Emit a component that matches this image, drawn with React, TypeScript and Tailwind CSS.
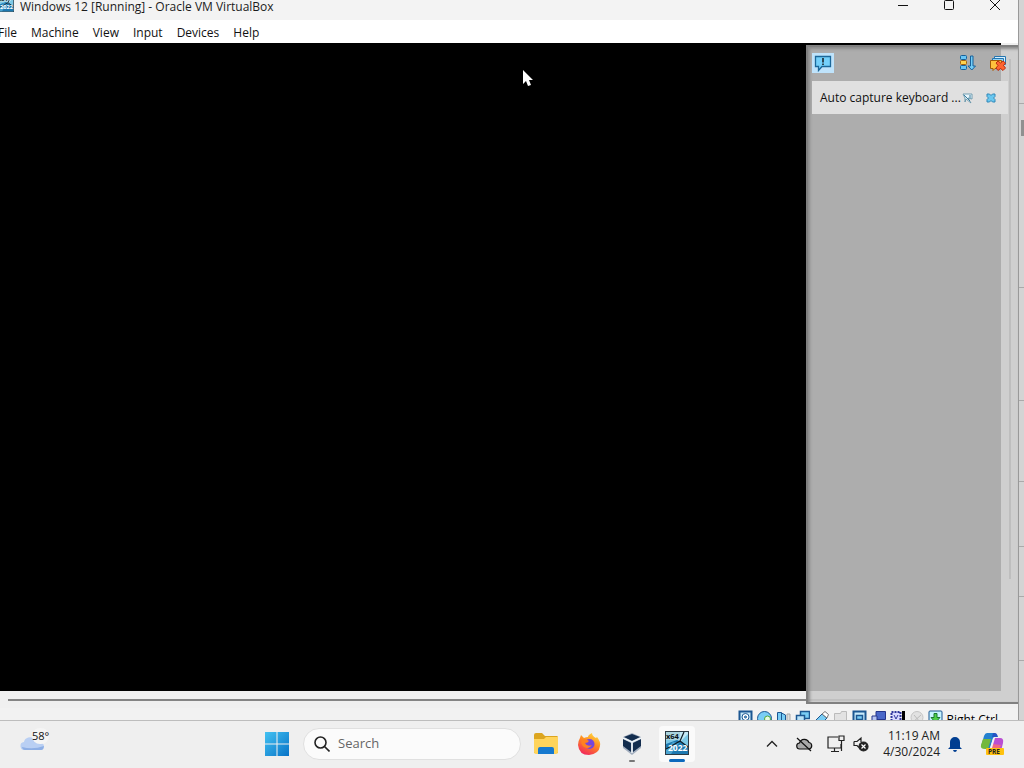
import type { ReactNode } from "react";

const menus = ["File", "Machine", "View", "Input", "Devices", "Help"];

// row heights of the window that sits behind, seen at the right edge
const rowHeights = [104, 184, 113, 81, 65, 50, 64];

function VmIcon({ className }: { className?: string }) {
  return (
    <svg viewBox="0 0 24 24" className={className}>
      <rect width="24" height="24" fill="#2b3a44" />
      <rect x="1" y="1" width="22" height="22" fill="#7cc8e6" />
      <path d="M1 13 12 9 23 15V23H1z" fill="#1d78b0" />
      <path d="M11 1 15 11 23 3V1z" fill="#c3e9f6" />
      <path d="M1 18 8 11 14 12 6 23H1z" fill="#4aa3d0" />
      <path d="M19 1 15 10 1 18M15 10 23 16" stroke="#0e1c26" strokeWidth="1.200" fill="none" />
      <rect x="1" y="1" width="14" height="8" fill="#a9d3dd" />
      <text x="1" y="8" fontSize="7.500" fontWeight="bold" fill="#0b1218" fontFamily="Open Sans, sans-serif">x64</text>
      <text x="3" y="20" fontSize="8.500" fontWeight="bold" fill="#fff" fontFamily="Open Sans, sans-serif">2022</text>
    </svg>
  );
}

function TitleBar() {
  return (
    <header className="flex h-5 shrink-0 items-start justify-between bg-[#f3f3f3]">
      <div className="flex items-start gap-1.5">
        <div className="h-3 w-3.5 overflow-hidden">
          <VmIcon className="-mt-1 -ml-0.5 h-4 w-4" />
        </div>
        <h1 className="text-xs leading-[14px] whitespace-nowrap text-[#1b1b1b]">Windows 12 [Running] - Oracle VM VirtualBox</h1>
      </div>
      <div className="flex">
        <button aria-label="Minimize" className="flex h-3 w-[46px] justify-center">
          <svg viewBox="0 0 12 12" className="h-3 w-3" stroke="#111" fill="none"><path d="M1 5.500h10" /></svg>
        </button>
        <button aria-label="Maximize" className="flex h-3 w-[46px] justify-center">
          <svg viewBox="0 0 12 12" className="h-3 w-3" stroke="#111" fill="none"><rect x="1.500" y=".5" width="9" height="9" rx="1" /></svg>
        </button>
        <button aria-label="Close" className="flex h-3 w-[46px] justify-center">
          <svg viewBox="0 0 12 12" className="h-3 w-3" stroke="#111" fill="none"><path d="M1 0 11 10M11 0 1 10" /></svg>
        </button>
      </div>
    </header>
  );
}

function MenuBar() {
  return (
    <div className="h-[23px] shrink-0 bg-white">
      <nav className="-ml-0.5 flex gap-3.5 pt-[5px] text-xs text-[#111]">
        {menus.map((m) => (
          <button key={m}>{m}</button>
        ))}
      </nav>
    </div>
  );
}

function NotificationCenter() {
  return (
    <aside className="absolute top-0.5 right-0 bottom-1 w-[212px] border-2 border-r-0 border-[#808080] bg-[#cacaca]/86 shadow-[inset_2px_2px_3px_#8a8a8a]">
      <div className="mb-0.5 flex h-8 items-center pr-3 pl-1">
        <button aria-label="Notifications" className="flex h-5 w-[22px] items-center justify-center bg-[#bfe3fb]">
          <svg viewBox="0 0 18 18" className="h-4.5 w-4.5">
            <path d="M1.500 2.500h15v10H8l-3.500 4v-4h-3z" fill="#74d0fa" stroke="#1b6799" strokeWidth="1.300" />
            <path d="M9 4v4.500M9 9.500V11" stroke="#111" strokeWidth="1.400" />
          </svg>
        </button>
        <button aria-label="Sort notifications" className="ml-auto">
          <svg viewBox="0 0 16 16" className="h-4 w-4" strokeWidth="1">
            <rect x=".5" y=".5" width="6" height="4" rx="1" fill="#69c5f5" stroke="#17609a" />
            <rect x=".5" y="5.500" width="6" height="4" rx="1" fill="#ffd34f" stroke="#a7620b" />
            <rect x=".5" y="10.500" width="6" height="4" rx="1" fill="#69c5f5" stroke="#17609a" />
            <path d="M10.500 1h2.500v10h2.500l-3.700 4-3.800-4h2.500z" fill="#73cef8" stroke="#17609a" />
          </svg>
        </button>
        <button aria-label="Remove all notifications" className="ml-3.5">
          <svg viewBox="0 0 16 16" className="h-4 w-4">
            <path d="M4.500 1.500h11v8h-11z" fill="#d9f1ff" stroke="#2576b0" />
            <path d="M2.500 3.500h11v8h-11z" fill="#8fd4fa" stroke="#2576b0" />
            <path d="M.5 5.500h11v8H5l-2 2v-2H.5z" fill="#ffc23d" stroke="#a35a08" />
            <path d="m6 8 2-2 2.500 2L13 6l2.500 2-2 2.500 2 2.500-2.500 2.500-2.500-2L8 15.500 6 13l2-2.500z" fill="#ff6530" stroke="#b82e10" />
          </svg>
        </button>
      </div>
      <div className="mr-2.5 ml-1 flex h-[33px] items-center bg-[#e0e0e0] pr-3 pl-2">
        <p className="grow text-xs whitespace-nowrap text-[#111]">Auto capture keyboard ...</p>
        <button aria-label="Keep notification">
          <svg viewBox="0 0 12 12" className="h-3 w-3">
            <path d="M1 2h9v5L6 6l3 5-5-4-1 3V6z" fill="#e8f5fb" stroke="#6795a9" strokeWidth=".9" />
            <path d="m2 3 6 6M8 3v3" stroke="#397e9f" />
          </svg>
        </button>
        <button aria-label="Close notification" className="ml-3">
          <svg viewBox="0 0 10 10" className="h-2.5 w-2.5">
            <path d="M1 1h2.500L5 2.500 6.500 1H9v2.500L7.500 5 9 6.500V9H6.500L5 7.500 3.500 9H1V6.500L2.500 5 1 3.500z" fill="#69c7ef" stroke="#3087b8" />
          </svg>
        </button>
      </div>
    </aside>
  );
}

function StatusIcon({ label, children }: { label: string; children: ReactNode }) {
  return (
    <button aria-label={label}>
      <svg viewBox="0 0 15 15" className="h-[15px] w-[15px]" stroke="#1c5792" fill="#79cdf5">{children}</svg>
    </button>
  );
}

function StatusBar() {
  return (
    <footer className="flex h-3 shrink-0 items-start justify-end gap-1 overflow-hidden bg-[#f2f2f2] pt-0.5 pr-5">
      <StatusIcon label="Hard disks">
        <path d="M1.500 1.500h12v13h-12z" fill="#c9eafa" strokeWidth="2" />
        <circle cx="7.500" cy="7" r="3.500" fill="#fff" />
        <circle cx="7.500" cy="7" r="1" />
      </StatusIcon>
      <StatusIcon label="Optical drives">
        <circle cx="7.500" cy="8.500" r="7" />
        <circle cx="10.500" cy="9" r="3" fill="#eafbe0" stroke="#4fa638" />
      </StatusIcon>
      <StatusIcon label="Audio">
        <path d="M1.500 2.500h4v10h-4zM5.500 3l4 2v9l-4-2z" />
        <path d="M11 4h3v9h-3z" fill="#ddd" stroke="#aaa" />
      </StatusIcon>
      <StatusIcon label="Network">
        <path d="M5.500 1.500h9v7h-9z" strokeWidth="1.500" />
        <path d="M1.500 5.500h8v6h-8z" fill="#b9e2f8" strokeWidth="1.500" />
      </StatusIcon>
      <StatusIcon label="USB">
        <path d="m1 11 7-7 5 4-7 7z" />
        <path d="m8 4 3-2.500 3.500 3L13 8z" fill="#fff" stroke="#777" />
      </StatusIcon>
      <StatusIcon label="Shared folders">
        <path d="M1.500 3.500h6l1-2h5v12h-12z" fill="#e2e2e2" stroke="#bbb" />
      </StatusIcon>
      <StatusIcon label="Display">
        <path d="M1.500 1.500h12v12h-12z" fill="#c9eafa" strokeWidth="2" />
        <path d="M4.500 5.500h6v4h-6z" strokeWidth="1.500" />
      </StatusIcon>
      <StatusIcon label="Recording">
        <path d="M5 1.500h9.500v8H5z" fill="#4967c8" stroke="#24358b" />
        <path d="M1 6h5v7H1z" fill="#b8c6f1" stroke="#24358b" />
      </StatusIcon>
      <StatusIcon label="Processor">
        <path d="M1.500 2h9v12h-9z" fill="#d8d9ff" stroke="#30389d" strokeDasharray="2 1" strokeWidth="2" />
        <path d="m4 5 2 4 2-4" fill="none" stroke="#30389d" />
        <path d="M12 1h3v13h-3z" fill="#000" stroke="none" />
      </StatusIcon>
      <StatusIcon label="Mouse integration">
        <circle cx="8" cy="7.500" r="6" fill="#e2e2e2" stroke="#c5c5c5" />
        <path d="m4 12 8-7M5 5l6 7" stroke="#bbb" />
      </StatusIcon>
      <StatusIcon label="Keyboard">
        <rect x="1" y="1" width="13" height="13" rx="1" fill="#c8f4ff" />
        <path d="M6 3.500h3v4h3l-4.500 5L3 7.500h3z" fill="#50cf48" stroke="#187731" />
      </StatusIcon>
      <span className="text-xs leading-5">Right Ctrl</span>
    </footer>
  );
}

function Taskbar() {
  return (
    <footer className="flex h-12 shrink-0 items-center border-t border-[#bdbdbd] bg-[#efefef] pb-0.5">
      <div className="flex-1 pb-1 pl-5">
        <button className="flex items-start" aria-label="Weather">
          <svg viewBox="0 0 26 20" className="h-5 w-6.5">
            <path d="M5 18a4 4 0 0 1-1-8 6 6 0 0 1 10-3 6 6 0 0 1 8 4 4 4 0 0 1 0 7z" fill="#b9cff3" />
            <path d="M2 15q11 3 22-1-.5 4-3 4H5q-2.500 0-3-3" fill="#8eafe5" />
          </svg>
          <span className="-mt-1 -ml-3.5 rounded-full bg-[#f5f5f5] text-[11px] leading-4 text-[#111]">58°</span>
        </button>
      </div>
      <div className="mr-16 flex items-center">
        <button aria-label="Start">
          <svg viewBox="0 0 23 23" className="h-6 w-6">
            <defs>
              <linearGradient id="start" x1="0" y1="0" x2="1" y2="1">
                <stop stopColor="#43c2f2" />
                <stop offset="1" stopColor="#0873c7" />
              </linearGradient>
            </defs>
            <path d="M0 0h11v11H0zM12 0h11v11H12zM0 12h11v11H0zM12 12h11v11H12z" fill="url(#start)" />
          </svg>
        </button>
        <label className="ml-3.5 flex h-8 w-[218px] items-center gap-2 rounded-full border border-[#e0e0e0] bg-[#fbfbfb] px-2.5">
          <svg viewBox="0 0 16 16" className="h-4 w-4 shrink-0" fill="none" stroke="#222" strokeWidth="1.600">
            <circle cx="6.500" cy="6.500" r="5.500" />
            <path d="m10.500 10.500 5 5" />
          </svg>
          <input placeholder="Search" aria-label="Search" className="w-full min-w-0 text-[13px] outline-none placeholder:text-[#666]" />
        </label>
        <button aria-label="File Explorer" className="ml-3">
          <svg viewBox="0 0 26 24" className="h-6 w-6.5">
            <path d="M1 3q0-2 2-2h6l3 3h12q1 0 1 2v15H1z" fill="#dca51f" />
            <path d="M1 7h10l2-2h12v15q0 2-2 2H3q-2 0-2-2z" fill="#ffd45b" />
            <path d="M5 22v-5q0-2 2-2h12q2 0 2 2v5z" fill="#1679cf" />
          </svg>
        </button>
        <button aria-label="Firefox" className="ml-4.5">
          <svg viewBox="0 0 24 24" className="h-6 w-6">
            <defs>
              <linearGradient id="fox" x1=".8" y1="0" x2=".3" y2="1">
                <stop stopColor="#ffde42" />
                <stop offset=".45" stopColor="#ff8a20" />
                <stop offset="1" stopColor="#f2265d" />
              </linearGradient>
            </defs>
            <path d="M3 6 4 3l3 3q2-1 4-1 0-2 4-4 0 3 4 5l1-1q4 5 3 9-1 8-11 9Q2 23 1 13q0-4 2-7" fill="url(#fox)" />
            <circle cx="12.500" cy="12" r="5" fill="#7646db" />
            <path d="M5 8q4-2 7 1-1 2-4 2 2 4 7 2-3 5-8 2-4-3-2-7" fill="#ff8120" />
          </svg>
        </button>
        <button aria-label="VirtualBox" className="ml-5 flex flex-col items-center gap-1 pt-1.5">
          <svg viewBox="0 0 22 24" className="h-6 w-5.5">
            <path d="m2 5 9-4 9 4v11l-9 7-9-7z" fill="#a3afbf" />
            <path d="m3 5 8-3 8 3-8 4zM2 7l8 4v9l-8-6zM20 7l-8 4v9l8-6z" fill="#132d4e" />
            <path d="m2 6 9 4 9-4M11 10v11" stroke="#eef4f8" strokeWidth="1.500" fill="none" />
          </svg>
          <span className="h-0.5 w-1.5 rounded-full bg-[#777]" />
        </button>
        <button aria-label="Windows 12 virtual machine" className="ml-4 flex h-9 w-9 flex-col items-center justify-end gap-1 rounded bg-[#fafafa]">
          <VmIcon className="h-6 w-6" />
          <span className="h-[3px] w-4 rounded-full bg-[#0b69bd]" />
        </button>
      </div>
      <div className="flex flex-1 items-center justify-end pr-5">
        <button aria-label="Show hidden icons">
          <svg viewBox="0 0 12 12" className="h-3 w-3" fill="none" stroke="#222" strokeWidth="1.300"><path d="m1 8.500 5-5 5 5" /></svg>
        </button>
        <button aria-label="OneDrive" className="ml-4.5">
          <svg viewBox="0 0 17 16" className="h-4 w-[17px]" fill="#aaa" stroke="#111" strokeWidth="1.200">
            <path d="M4 13a3 3 0 0 1-.5-6A5 5 0 0 1 13 6.500 3.300 3.300 0 0 1 13 13z" />
            <path d="m1 2 14 13" />
          </svg>
        </button>
        <button aria-label="Network" className="ml-3.5">
          <svg viewBox="0 0 18 18" className="h-4.5 w-4.5" fill="none" stroke="#222" strokeWidth="1.200">
            <path d="M11 2H1v11h13V9M7.500 13v3M4 16.500h8M12 1h5v4.500h-5zM14.500 5.500V16" />
          </svg>
        </button>
        <button aria-label="Volume" className="ml-2">
          <svg viewBox="0 0 16 16" className="h-4 w-4" fill="none" stroke="#222" strokeWidth="1.200">
            <path d="M1 5.500h3L8 2v4M1 5.500v4h3l2 2" />
            <circle cx="10.500" cy="10.500" r="4.500" fill="#222" />
            <path d="m8.500 8.500 4 4m0-4-4 4" stroke="#fff" />
          </svg>
        </button>
        <button className="ml-3.5 text-right text-xs leading-4 whitespace-nowrap text-[#222]">
          11:19 AM
          <br />
          4/30/2024
        </button>
        <button aria-label="Notifications" className="ml-2">
          <svg viewBox="0 0 14 16" className="h-4 w-3.5" fill="#003e91">
            <path d="M2 11V6a5 5 0 0 1 10 0v5l2 2H0zM5 14h4q-.5 2-2 2t-2-2" />
          </svg>
        </button>
        <button aria-label="Copilot" className="ml-4.5">
          <svg viewBox="0 0 24 24" className="h-6 w-6">
            <path d="M7 1h8l-5 15H4q-4 0-2-5l2-7q1-3 3-3" fill="#2380cf" />
            <path d="M3 7 1 13q-1 4 4 4h3l3-10z" fill="#73b83d" />
            <path d="M13 1h2q2 0 3 4h-6z" fill="#2454c4" />
            <path d="M14 6h6q4 0 3 5l-2 8h-8l-3-2z" fill="#b94fd2" />
            <path d="m12 12-2 8h8l3-7z" fill="#ef6985" />
            <path d="m13 6-3 10h2l3-10z" fill="#f3f3f3" />
            <rect x="6" y="16" width="18" height="7" rx="1" fill="#ffc20e" />
            <text x="8" y="22" fontSize="6.500" fontWeight="bold" fill="#222" fontFamily="Open Sans, sans-serif">PRE</text>
          </svg>
        </button>
      </div>
    </footer>
  );
}

export default function App() {
  return (
    <div className="flex h-screen flex-col overflow-hidden bg-[#f0f0f0] font-['Open_Sans',sans-serif]">
      <div className="flex min-h-0 grow">
        <main className="flex min-w-0 grow flex-col bg-[#f0f0f0]">
          <TitleBar />
          <MenuBar />
          <section className="relative flex min-h-0 grow flex-col">
            <div className="flex min-h-0 grow">
              <div className="grow bg-black" aria-label="Guest display" />
              <div className="flex w-[17px] justify-center pt-4 pb-28">
                <div className="w-0.5 bg-[#777]" />
              </div>
            </div>
            <div className="flex h-[17px] shrink-0 items-center pr-12 pl-2">
              <div className="h-0.5 grow bg-[#858585]" />
            </div>
            <NotificationCenter />
            {/* mouse pointer */}
            <svg viewBox="0 0 12 20" className="absolute top-[26px] left-[522px] h-5 w-3">
              <path d="M1 1v14l3-3 2 5 3-1-2-5h4z" fill="#fff" />
            </svg>
          </section>
          <StatusBar />
        </main>
        <div className="w-1.5 overflow-hidden border-l border-[#999] bg-[#d4d4d4]">
          {rowHeights.map((h, i) => (
            <div key={i} style={{ height: h }} className="border-b border-[#aaa] pt-4">
              {i === 1 && <div className="ml-0.5 h-4 bg-[#909090]" />}
            </div>
          ))}
        </div>
      </div>
      <Taskbar />
    </div>
  );
}
